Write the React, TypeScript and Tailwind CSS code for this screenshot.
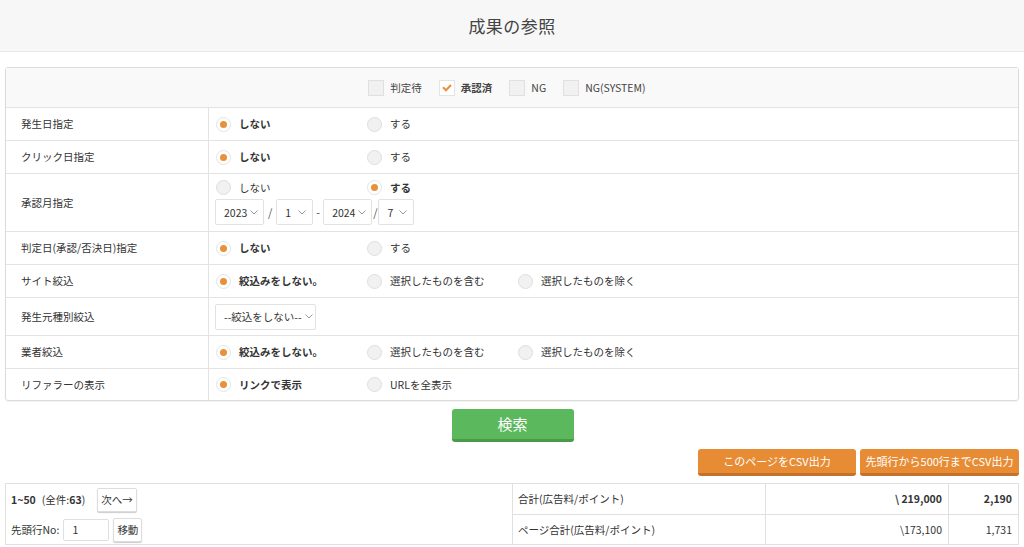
import React from "react";

const font = { fontFamily: '"Noto Sans CJK JP", "Noto Sans", sans-serif' };

function Radio({ checked, label }: { checked?: boolean; label: string }) {
  return (
    <label className="flex items-center w-[151px] shrink-0">
      <span
        className={
          "w-[15px] h-[15px] rounded-full border flex items-center justify-center " +
          (checked ? "bg-white border-[#e4e4e4]" : "bg-[#f1f1f1] border-[#dedede]")
        }
      >
        {checked && <span className="w-[7px] h-[7px] rounded-full bg-[#e8913a]" />}
      </span>
      <span className={"ml-[8px] text-[10.5px] text-[#333] " + (checked ? "font-bold" : "")}>{label}</span>
    </label>
  );
}

function Check({ checked, label }: { checked?: boolean; label: string }) {
  return (
    <label className="flex items-center">
      <span
        className={
          "w-[16px] h-[16px] border flex items-center justify-center " +
          (checked ? "bg-white border-[#e4e4e4]" : "bg-[#f1f1f1] border-[#e0e0e0]")
        }
      >
        {checked && (
          <svg width="10" height="8" viewBox="0 0 10 8">
            <path d="M1 3.2 L4 6.2 L9 1" fill="none" stroke="#e8913a" strokeWidth="2" />
          </svg>
        )}
      </span>
      <span className={"ml-[6px] text-[10.5px] text-[#444] " + (checked ? "font-bold" : "")}>{label}</span>
    </label>
  );
}

function Select({ value, w }: { value: string; w: string }) {
  return (
    <div
      className={
        "h-[26px] border border-[#e2e2e2] rounded-[2px] bg-white flex items-center justify-between pl-[8px] pr-[6px] text-[10.5px] text-[#333] whitespace-nowrap " +
        w
      }
    >
      <span>{value}</span>
      <svg width="8" height="5" viewBox="0 0 8 5" className="shrink-0 ml-[3px]">
        <path d="M0.5 0.5 L4 4 L7.5 0.5" fill="none" stroke="#999" strokeWidth="1" />
      </svg>
    </div>
  );
}

function Row({ label, h, children }: { label: string; h: string; children: React.ReactNode }) {
  return (
    <div className={"grid grid-cols-[203px_1fr] border-t border-[#e3e3e3] " + h}>
      <div className="border-r border-[#e3e3e3] flex items-center pl-[15px] text-[10.5px] text-[#333]">{label}</div>
      <div className="flex items-center pl-[7px]">{children}</div>
    </div>
  );
}

export default function App() {
  return (
    <div style={font} className="w-[1024px] h-[547px] bg-white overflow-hidden">
      <div className="h-[52px] bg-[#f7f7f7] border-b border-[#e8e8e8] flex items-center justify-center">
        <h1 className="text-[17px] text-[#444] tracking-wide">成果の参照</h1>
      </div>

      <div className="mt-[15px] mx-[5px] border border-[#dcdcdc] rounded-[3px] shadow-[0_1px_2px_rgba(0,0,0,0.06)]">
        <div className="h-[39px] bg-[#f9f9f9] flex items-center justify-center gap-[17px] pr-[10px]">
          <Check label="判定待" />
          <Check checked label="承認済" />
          <Check label="NG" />
          <Check label="NG(SYSTEM)" />
        </div>
        <Row label="発生日指定" h="h-[33px]">
          <Radio checked label="しない" />
          <Radio label="する" />
        </Row>
        <Row label="クリック日指定" h="h-[33px]">
          <Radio checked label="しない" />
          <Radio label="する" />
        </Row>
        <Row label="承認月指定" h="h-[58px]">
          <div className="flex flex-col gap-[4px] -ml-[1px]">
            <div className="flex pl-[1px]">
              <Radio label="しない" />
              <Radio checked label="する" />
            </div>
            <div className="flex items-center text-[11px] text-[#555]">
              <Select value="2023" w="w-[49px]" />
              <span className="mx-[4px]">/</span>
              <Select value="1" w="w-[37px]" />
              <span className="mx-[3px]">-</span>
              <Select value="2024" w="w-[49px]" />
              <span className="mx-[1px]">/</span>
              <Select value="7" w="w-[36px]" />
            </div>
          </div>
        </Row>
        <Row label="判定日(承認/否決日)指定" h="h-[33px]">
          <Radio checked label="しない" />
          <Radio label="する" />
        </Row>
        <Row label="サイト絞込" h="h-[33px]">
          <Radio checked label="絞込みをしない。" />
          <Radio label="選択したものを含む" />
          <Radio label="選択したものを除く" />
        </Row>
        <Row label="発生元種別絞込" h="h-[38px]">
          <Select value="--絞込をしない--" w="w-[101px] -ml-[1px]" />
        </Row>
        <Row label="業者絞込" h="h-[33px]">
          <Radio checked label="絞込みをしない。" />
          <Radio label="選択したものを含む" />
          <Radio label="選択したものを除く" />
        </Row>
        <Row label="リファラーの表示" h="h-[32px]">
          <Radio checked label="リンクで表示" />
          <Radio label="URLを全表示" />
        </Row>
      </div>

      <div className="flex justify-center mt-[8px] pl-[1px]">
        <button className="w-[122px] h-[33px] rounded-[3px] bg-[#5cb85c] border-b-[3px] border-[#4a9a4a] text-white text-[15px]">
          検索
        </button>
      </div>

      <div className="flex justify-end gap-[4px] mr-[5px] mt-[7px]">
        <button className="w-[158px] h-[27px] rounded-[3px] bg-[#e78c35] border-b-[3px] border-[#c2722a] text-white text-[11px]">
          このページをCSV出力
        </button>
        <button className="w-[159px] h-[27px] rounded-[3px] bg-[#e78c35] border-b-[3px] border-[#c2722a] text-white text-[11px]">
          先頭行から500行までCSV出力
        </button>
      </div>

      <div className="mt-[7px] mx-[5px] border border-[#e0e0e0] grid grid-cols-[507px_253px_183px_1fr] text-[10.5px] text-[#333]">
        <div className="row-span-2 border-r border-[#e0e0e0] flex flex-col">
          <div className="h-[31px] flex items-center pl-[5px]">
            <span className="font-bold">1~50</span>
            <span className="ml-[6px]">(全件:<b>63</b>)</span>
            <button className="ml-[12px] h-[24px] px-[3px] bg-white border border-[#ddd] rounded-[2px] shadow-[0_1px_1px_rgba(0,0,0,0.2)] text-[10.5px]">
              次へ→
            </button>
          </div>
          <div className="h-[29px] flex items-center pl-[5px]">
            <span>先頭行No:</span>
            <div className="ml-[4px] w-[46px] h-[22px] border border-[#e0e0e0] rounded-[2px] flex items-center pl-[8px]">1</div>
            <button className="ml-[4px] h-[24px] px-[3px] bg-white border border-[#ddd] rounded-[2px] shadow-[0_1px_1px_rgba(0,0,0,0.2)] text-[10.5px]">
              移動
            </button>
          </div>
        </div>
        <div className="h-[31px] border-r border-b border-[#e0e0e0] flex items-center pl-[5px]">合計(広告料/ポイント)</div>
        <div className="h-[31px] border-r border-b border-[#e0e0e0] flex items-center justify-end pr-[6px] font-bold">\ 219,000</div>
        <div className="h-[31px] border-b border-[#e0e0e0] flex items-center justify-end pr-[6px] font-bold">2,190</div>
        <div className="h-[29px] border-r border-[#e0e0e0] flex items-center pl-[5px]">ページ合計(広告料/ポイント)</div>
        <div className="h-[29px] border-r border-[#e0e0e0] flex items-center justify-end pr-[6px]">\173,100</div>
        <div className="h-[29px] flex items-center justify-end pr-[6px]">1,731</div>
      </div>
    </div>
  );
}
